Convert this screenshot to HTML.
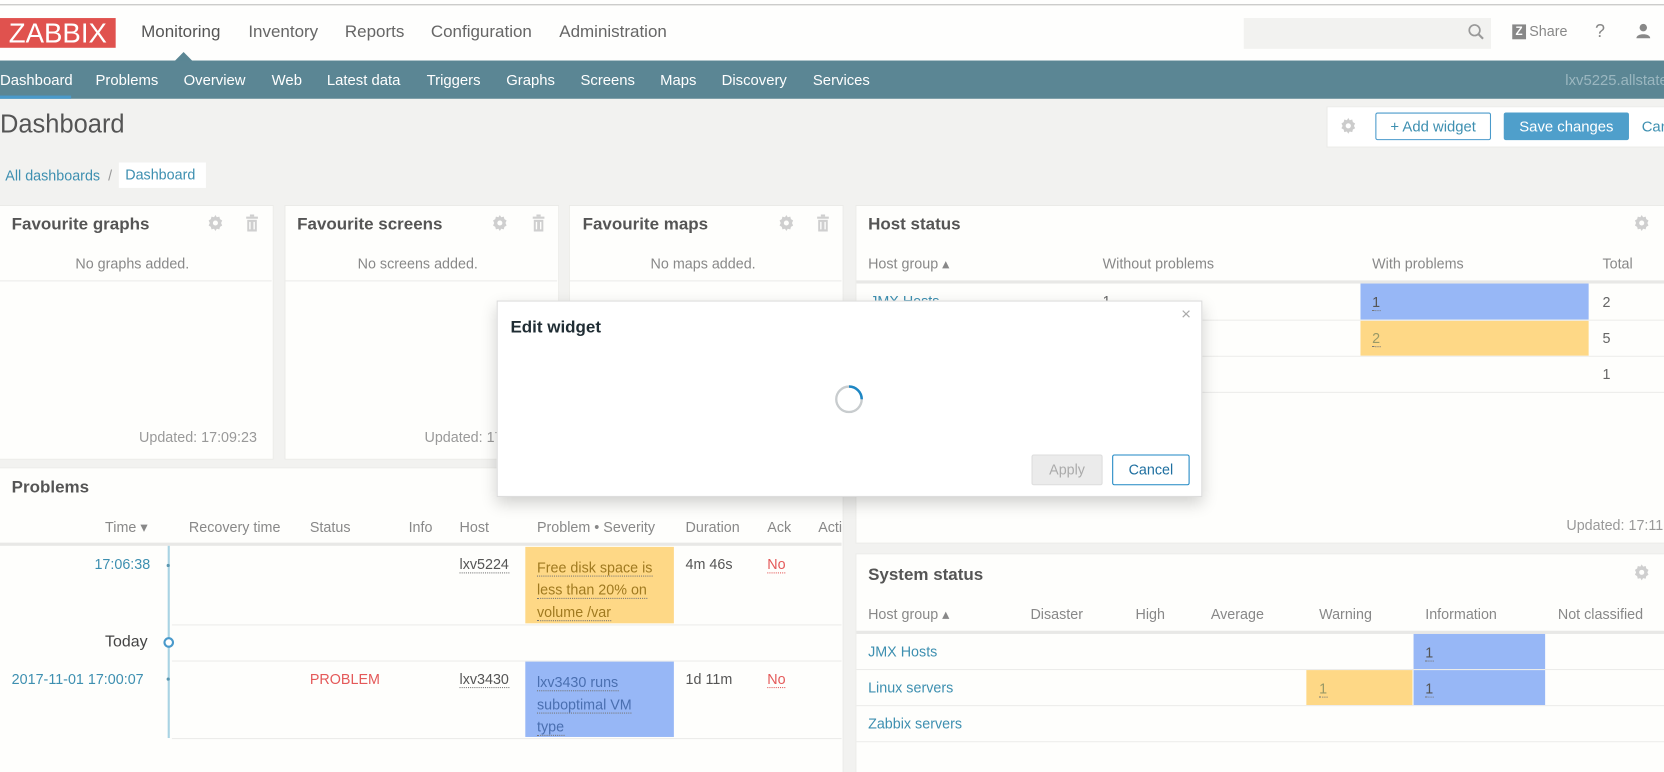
<!DOCTYPE html>
<html><head><meta charset="utf-8">
<style>
html,body{margin:0;padding:0;overflow:hidden;width:1664px;height:772px;background:#f2f2f0}
#s{position:absolute;left:0;top:0;width:1568px;height:727px;transform:scale(1.06122,1.0619);transform-origin:0 0;font-family:"Liberation Sans",Arial,sans-serif;font-size:13.5px;color:#666;background:#f2f2f0;overflow:hidden}
.a{position:absolute;white-space:nowrap}
.w{position:absolute;background:#fefefc;border:1px solid #ebebe8}
.t{position:absolute;font-weight:bold;font-size:16px;color:#555}
.l{color:#3d8fb0}
.hl{position:absolute;height:1px;background:#ececea}
.dot{border-bottom:1px dotted #777}
.blue{position:absolute;background:#97b7f6}
.or{position:absolute;background:#fed886}
</style></head><body><div id="s">
<div class="a" style="left:0;top:0;width:1568px;height:57px;background:#fefefd"></div>
<div class="a" style="left:0;top:4px;width:1568px;height:1px;background:#bbb"></div>
<div class="a" style="left:0;top:17px;width:109px;height:28px;background:#e0524e;color:#fff;font-size:26px;line-height:29px;text-align:center;letter-spacing:0px">ZABBIX</div>
<div class="a" style="left:133px;top:22px;font-size:16px;color:#555">Monitoring</div>
<div class="a" style="left:234px;top:22px;font-size:16px;color:#666">Inventory</div>
<div class="a" style="left:325px;top:22px;font-size:16px;color:#666">Reports</div>
<div class="a" style="left:406px;top:22px;font-size:16px;color:#666">Configuration</div>
<div class="a" style="left:527px;top:22px;font-size:16px;color:#666">Administration</div>
<div class="a" style="left:164px;top:49px;width:0;height:0;border-left:9px solid transparent;border-right:9px solid transparent;border-bottom:9px solid #5b8694"></div>
<div class="a" style="left:1172px;top:17px;width:233px;height:29px;background:#f2f2f0"></div>
<svg class="a" style="left:1383px;top:22px" width="16" height="16" viewBox="0 0 16 16"><circle cx="6.5" cy="6.5" r="5" fill="none" stroke="#999" stroke-width="1.6"/><path d="M10 10l4.5 4.5" stroke="#999" stroke-width="2"/></svg>
<div class="a" style="left:1425px;top:23px;width:13px;height:14px;background:#888;color:#fff;font-weight:bold;font-size:11px;line-height:14px;text-align:center">Z</div>
<div class="a" style="left:1441px;top:22px;color:#888">Share</div>
<div class="a" style="left:1503px;top:20px;font-size:17px;color:#888">?</div>
<svg class="a" style="left:1541px;top:22px" width="15" height="15" viewBox="0 0 15 15"><circle cx="7.5" cy="4" r="3.5" fill="#888"/><path d="M1 14c0-5 13-5 13 0z" fill="#888"/></svg>
<div class="a" style="left:0;top:57px;width:1568px;height:36px;background:#5b8694"></div>
<div class="a" style="left:0;top:90px;width:67px;height:3px;background:#4a9acb"></div>
<div class="a" style="left:0;top:67px;color:#fff;font-size:14px">Dashboard</div>
<div class="a" style="left:90px;top:67px;color:#fff;font-size:14px">Problems</div>
<div class="a" style="left:173px;top:67px;color:#fff;font-size:14px">Overview</div>
<div class="a" style="left:256px;top:67px;color:#fff;font-size:14px">Web</div>
<div class="a" style="left:308px;top:67px;color:#fff;font-size:14px">Latest data</div>
<div class="a" style="left:402px;top:67px;color:#fff;font-size:14px">Triggers</div>
<div class="a" style="left:477px;top:67px;color:#fff;font-size:14px">Graphs</div>
<div class="a" style="left:547px;top:67px;color:#fff;font-size:14px">Screens</div>
<div class="a" style="left:622px;top:67px;color:#fff;font-size:14px">Maps</div>
<div class="a" style="left:680px;top:67px;color:#fff;font-size:14px">Discovery</div>
<div class="a" style="left:766px;top:67px;color:#fff;font-size:14px">Services</div>
<div class="a" style="left:1475px;top:67px;color:#9bb7c0;font-size:14px">lxv5225.allstate</div>
<div class="a" style="left:0;top:104px;font-size:24px;color:#555">Dashboard</div>
<div class="a" style="left:1250px;top:100px;width:318px;height:37px;background:#fff;border:1px solid #ebebe8"></div>
<svg class="a" style="left:1262px;top:110px" width="17" height="17" viewBox="0 0 16 16"><path d="M8 1l1.2 2 2.3-.6.6 2.3 2 1.2-1.1 2.1 1.1 2.1-2 1.2-.6 2.3-2.3-.6L8 15l-1.2-2-2.3.6-.6-2.3-2-1.2L3 8 1.9 5.9l2-1.2.6-2.3 2.3.6z" fill="#ccc"/><circle cx="8" cy="8" r="2.3" fill="#fff"/></svg>
<div class="a" style="left:1296px;top:106px;width:107px;height:24px;border:1px solid #4a9acb;border-radius:2px;background:#fff;color:#3d8fb0;line-height:24px;text-align:center;font-size:14px">+ Add widget</div>
<div class="a" style="left:1417px;top:106px;width:118px;height:26px;background:#4f9fcb;border-radius:2px;color:#fff;line-height:26px;text-align:center;font-size:14px">Save changes</div>
<div class="a" style="left:1547px;top:111px;color:#3d8fb0;font-size:14px">Cancel</div>
<div class="a" style="left:5px;top:158px"><span class="l">All dashboards</span> <span style="color:#999">&nbsp;/&nbsp;</span></div>
<div class="a" style="left:112px;top:153px;width:82px;height:24px;background:#fff;color:#3d8fb0;line-height:24px;text-indent:6px">Dashboard</div>
<div class="w" style="left:-1px;top:193px;width:257px;height:238px"></div>
<div class="w" style="left:268px;top:193px;width:257px;height:238px"></div>
<div class="w" style="left:536px;top:193px;width:257px;height:238px"></div>
<div class="t" style="left:11px;top:203px">Favourite graphs</div>
<div class="t" style="left:280px;top:203px">Favourite screens</div>
<div class="t" style="left:549px;top:203px">Favourite maps</div>
<div class="a" style="left:71px;top:241px;color:#888">No graphs added.</div>
<div class="a" style="left:337px;top:241px;color:#888">No screens added.</div>
<div class="a" style="left:613px;top:241px;color:#888">No maps added.</div>
<div class="hl" style="left:0;top:264px;width:256px"></div>
<div class="hl" style="left:269px;top:264px;width:256px"></div>
<div class="hl" style="left:537px;top:264px;width:256px"></div>
<div class="a" style="left:131px;top:404px;color:#999">Updated: 17:09:23</div>
<div class="a" style="left:400px;top:404px;color:#999">Updated: 17:09:23</div>
<div class="w" style="left:806px;top:193px;width:762px;height:317px"></div>
<div class="t" style="left:818px;top:203px">Host status</div>
<div class="a" style="left:818px;top:241px;color:#888">Host group ▴</div>
<div class="a" style="left:1039px;top:241px;color:#888">Without problems</div>
<div class="a" style="left:1293px;top:241px;color:#888">With problems</div>
<div class="a" style="left:1510px;top:241px;color:#888">Total</div>
<div class="a" style="left:807px;top:264px;width:761px;height:3px;background:#e8e8e6"></div>
<div class="blue" style="left:1282px;top:267px;width:215px;height:34px"></div>
<div class="or" style="left:1282px;top:302px;width:215px;height:33px"></div>
<div class="hl" style="left:807px;top:301px;width:761px"></div>
<div class="hl" style="left:807px;top:335px;width:761px"></div>
<div class="hl" style="left:807px;top:369px;width:761px"></div>
<div class="a l" style="left:820px;top:276px">JMX Hosts</div>
<div class="a" style="left:1039px;top:276px">1</div>
<div class="a" style="left:1293px;top:277px;color:#555"><span class="dot">1</span></div>
<div class="a" style="left:1293px;top:311px;color:#996"><span class="dot">2</span></div>
<div class="a" style="left:1510px;top:277px">2</div>
<div class="a" style="left:1510px;top:311px">5</div>
<div class="a" style="left:1510px;top:345px">1</div>
<div class="a" style="left:1476px;top:487px;color:#999">Updated: 17:11:00</div>
<div class="w" style="left:806px;top:521px;width:762px;height:210px"></div>
<div class="t" style="left:818px;top:533px">System status</div>
<div class="a" style="left:818px;top:571px;color:#888">Host group ▴</div>
<div class="a" style="left:971px;top:571px;color:#888">Disaster</div>
<div class="a" style="left:1070px;top:571px;color:#888">High</div>
<div class="a" style="left:1141px;top:571px;color:#888">Average</div>
<div class="a" style="left:1243px;top:571px;color:#888">Warning</div>
<div class="a" style="left:1343px;top:571px;color:#888">Information</div>
<div class="a" style="left:1468px;top:571px;color:#888">Not classified</div>
<div class="a" style="left:807px;top:594px;width:761px;height:3px;background:#e8e8e6"></div>
<div class="blue" style="left:1332px;top:597px;width:124px;height:33px"></div>
<div class="blue" style="left:1332px;top:631px;width:124px;height:33px"></div>
<div class="or" style="left:1231px;top:631px;width:100px;height:33px"></div>
<div class="hl" style="left:807px;top:630px;width:761px"></div>
<div class="hl" style="left:807px;top:664px;width:761px"></div>
<div class="hl" style="left:807px;top:698px;width:761px"></div>
<div class="a l" style="left:818px;top:606px">JMX Hosts</div>
<div class="a l" style="left:818px;top:640px">Linux servers</div>
<div class="a l" style="left:818px;top:674px">Zabbix servers</div>
<div class="a" style="left:1343px;top:607px;color:#555"><span class="dot">1</span></div>
<div class="a" style="left:1343px;top:641px;color:#555"><span class="dot">1</span></div>
<div class="a" style="left:1243px;top:641px;color:#996"><span class="dot">1</span></div>
<div class="w" style="left:-1px;top:440px;width:794px;height:291px"></div>
<div class="t" style="left:11px;top:451px">Problems</div>
<div class="a" style="left:99px;top:489px;color:#888">Time ▾</div>
<div class="a" style="left:178px;top:489px;color:#888">Recovery time</div>
<div class="a" style="left:292px;top:489px;color:#888">Status</div>
<div class="a" style="left:385px;top:489px;color:#888">Info</div>
<div class="a" style="left:433px;top:489px;color:#888">Host</div>
<div class="a" style="left:506px;top:489px;color:#888">Problem • Severity</div>
<div class="a" style="left:646px;top:489px;color:#888">Duration</div>
<div class="a" style="left:723px;top:489px;color:#888">Ack</div>
<div class="a" style="left:771px;top:489px;color:#888">Acti</div>
<div class="a" style="left:0;top:511px;width:793px;height:3px;background:#e8e8e6"></div>
<div class="a" style="left:158px;top:514px;width:2px;height:181px;background:#a9d3e3"></div>
<div class="or" style="left:495px;top:515px;width:140px;height:72px"></div>
<div class="blue" style="left:495px;top:623px;width:140px;height:71px"></div>
<div class="hl" style="left:162px;top:588px;width:631px"></div>
<div class="hl" style="left:162px;top:622px;width:631px"></div>
<div class="hl" style="left:162px;top:695px;width:631px"></div>
<div class="a l" style="left:89px;top:524px">17:06:38</div>
<div class="a" style="left:157px;top:531px;width:3px;height:3px;background:#5b97b0;border-radius:50%"></div>
<div class="a" style="left:433px;top:524px;color:#555"><span class="dot">lxv5224</span></div>
<div class="a" style="left:506px;top:524px;color:#a07a20;line-height:21px;white-space:normal;width:112px"><span class="dot">Free disk space is less than 20% on volume /var</span></div>
<div class="a" style="left:646px;top:524px;color:#555">4m 46s</div>
<div class="a" style="left:723px;top:524px;color:#e45959"><span style="border-bottom:1px dotted #e45959">No</span></div>
<div class="a" style="left:99px;top:596px;color:#444;font-size:15px">Today</div>
<div class="a" style="left:154px;top:600px;width:6px;height:6px;border:2px solid #4a9acb;border-radius:50%;background:#fff"></div>
<div class="a l" style="left:11px;top:632px">2017-11-01 17:00:07</div>
<div class="a" style="left:157px;top:638px;width:3px;height:3px;background:#5b97b0;border-radius:50%"></div>
<div class="a" style="left:292px;top:632px;color:#e45959">PROBLEM</div>
<div class="a" style="left:433px;top:632px;color:#555"><span class="dot">lxv3430</span></div>
<div class="a" style="left:506px;top:632px;color:#4a6fb0;line-height:21px;white-space:normal;width:112px"><span class="dot">lxv3430 runs suboptimal VM type</span></div>
<div class="a" style="left:646px;top:632px;color:#555">1d 11m</div>
<div class="a" style="left:723px;top:632px;color:#e45959"><span style="border-bottom:1px dotted #e45959">No</span></div>
<div class="a" style="left:468px;top:283px;width:663px;height:183px;background:#fff;border:1px solid #dcdcdc;box-shadow:0 6px 14px rgba(0,0,0,0.18)"></div>
<div class="a" style="left:481px;top:300px;font-weight:bold;font-size:16px;color:#1f2c33">Edit widget</div>
<div class="a" style="left:1113px;top:288px;font-size:16px;color:#aaa">×</div>
<svg class="a" style="left:786px;top:362px" width="28" height="28" viewBox="0 0 28 28"><circle cx="14" cy="14" r="12" fill="none" stroke="#c8ccce" stroke-width="2.2"/><path d="M14 2a12 12 0 0 1 12 12" fill="none" stroke="#1e87c4" stroke-width="2.4"/></svg>
<div class="a" style="left:972px;top:428px;width:65px;height:27px;background:#ebebeb;border:1px solid #ddd;border-radius:2px;color:#aaa;text-align:center;line-height:27px">Apply</div>
<div class="a" style="left:1048px;top:428px;width:71px;height:27px;border:1px solid #1e87c4;border-radius:2px;background:#fff;color:#1e6fa0;text-align:center;line-height:27px">Cancel</div>
<svg class="a" style="left:0;top:0" width="1568" height="727">
<defs><g id="g"><path d="M8 0.5l1.3 2.1 2.4-.6.6 2.4 2.1 1.3L13.3 8l1.1 2.3-2.1 1.3-.6 2.4-2.4-.6L8 15.5l-1.3-2.1-2.4.6-.6-2.4-2.1-1.3L2.7 8 1.6 5.7l2.1-1.3.6-2.4 2.4.6z" fill="#cfcfcf"/><circle cx="8" cy="8" r="2.4" fill="#fefefc"/></g>
<g id="tr"><rect x="2" y="2" width="11" height="2" fill="#cfcfcf"/><rect x="5.5" y="0" width="4" height="2" fill="#cfcfcf"/><path d="M3 5h9v11H3z" fill="#cfcfcf"/><path d="M5.5 7v7M9.5 7v7" stroke="#fefefc" stroke-width="1.3"/></g></defs>
<use href="#g" x="195" y="202"/><use href="#tr" x="230" y="202"/>
<use href="#g" x="463" y="202"/><use href="#tr" x="500" y="202"/>
<use href="#g" x="733" y="202"/><use href="#tr" x="768" y="202"/>
<use href="#g" x="1539" y="202"/>
<use href="#g" x="1539" y="531"/>
</svg>
</div></body></html>
